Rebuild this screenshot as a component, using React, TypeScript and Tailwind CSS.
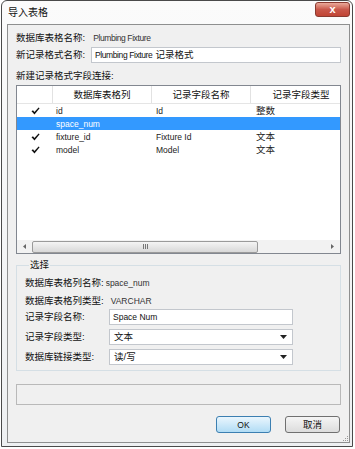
const font = { fontFamily: '"Liberation Sans", "Noto Sans CJK SC", sans-serif' };

function Check() {
  return (
    <svg width="9" height="8" viewBox="0 0 9 8" className="block">
      <path d="M0.5 4.3 L2 3.2 L3.4 5 L7.6 0.4 L8.6 1.2 L3.5 7.4 Z" fill="#111" />
    </svg>
  );
}

function Caret() {
  return (
    <svg width="7" height="4" viewBox="0 0 7 4" className="block">
      <path d="M0 0 H7 L3.5 4 Z" fill="#222" />
    </svg>
  );
}

const rows = [
  { check: true, col: "id", name: "Id", type: "整数" },
  { check: false, col: "space_num", name: "", type: "", selected: true },
  { check: true, col: "fixture_id", name: "Fixture Id", type: "文本" },
  { check: true, col: "model", name: "Model", type: "文本" },
];

function FieldTable() {
  return (
    <div className="mt-[2px] flex h-[169px] flex-col overflow-hidden border border-[#828790] bg-white">
      <div className="flex h-[18px] w-[334px] shrink-0 border-b border-[#e5e5e5] text-[#111]">
        <div className="w-[36px] border-r border-[#e2e2e2]" />
        <div className="flex w-[99px] items-center justify-center border-r border-[#e2e2e2]">数据库表格列</div>
        <div className="flex w-[99px] items-center justify-center border-r border-[#e2e2e2]">记录字段名称</div>
        <div className="flex w-[100px] items-center justify-center">记录字段类型</div>
      </div>
      {rows.map((r) => (
        <div
          key={r.col}
          className={`flex h-[13px] w-full shrink-0 items-center ${r.selected ? "bg-[#3399ff] text-white" : "text-[#222]"}`}
        >
          <div className="flex w-[36px] justify-center pl-[1px]">{r.check && <Check />}</div>
          <div className="w-[99px] pl-[3px] text-[8.5px]">{r.col}</div>
          <div className="w-[99px] pl-[4px] text-[8.5px]">{r.name}</div>
          <div className="w-[80px] pl-[5px]">{r.type}</div>
        </div>
      ))}
      <div className="flex-1" />
      <div className="flex h-[13px] shrink-0 items-center bg-[#f2f2f2]">
        <div className="flex w-[15px] justify-center">
          <svg width="3" height="5" viewBox="0 0 3 5"><path d="M3 0 V5 L0 2.5 Z" fill="#666" /></svg>
        </div>
        <div className="flex h-[12px] w-[226px] items-center justify-center rounded-[2px] border border-[#9a9a9a] bg-gradient-to-b from-[#f4f4f4] to-[#d8d8d8]">
          <div className="flex gap-[1px]">
            <span className="h-[5px] w-[1px] bg-[#777]" />
            <span className="h-[5px] w-[1px] bg-[#777]" />
            <span className="h-[5px] w-[1px] bg-[#777]" />
          </div>
        </div>
        <div className="flex-1" />
        <div className="flex w-[15px] justify-center">
          <svg width="3" height="5" viewBox="0 0 3 5"><path d="M0 0 V5 L3 2.5 Z" fill="#666" /></svg>
        </div>
      </div>
    </div>
  );
}

function Select({ value }: { value: string }) {
  return (
    <div className="flex h-[16px] w-[184px] items-center justify-between border border-[#c3c7cd] bg-white pl-[4px] pr-[5px] text-[#111]">
      <span>{value}</span>
      <Caret />
    </div>
  );
}

export default function App() {
  return (
    <div style={font} className="h-[449px] w-[355px] bg-white text-[9.5px] leading-[12px] text-[#111]">
      <div className="ml-[1px] flex h-[447px] w-[352px] flex-col rounded-t-[6px] border border-[#4a4a4a] bg-gradient-to-b from-[#fbfbfb] to-[#eef0f2]">
        <div className="flex h-[23px] shrink-0 items-start justify-between">
          <span className="mt-[6px] pl-[6px] text-[10px] text-[#111]">导入表格</span>
          <div className="mr-[2px] mt-[1px] flex h-[15px] w-[35px] items-center justify-center rounded-[3px] border border-[#8a3a30] bg-gradient-to-b from-[#e9a99a] via-[#c9584b] to-[#c04434] text-[11px] font-bold leading-none text-white">
            x
          </div>
        </div>
        <div className="relative ml-[5px] mr-[2px] flex h-[419px] shrink-0 flex-col border border-[#8e8f8f] bg-[#f0f0f0] px-[8px]">
          <div className="mt-[6px] flex h-[14px] items-center">
            <span>数据库表格名称:</span>
            <span className="ml-[8px] text-[8.5px] tracking-[-0.4px] text-[#333]">Plumbing Fixture</span>
          </div>
          <div className="mt-[2px] flex h-[16px] items-center">
            <span className="w-[75px]">新记录格式名称:</span>
            <div className="flex h-[16px] flex-1 items-center border border-[#c3c7cd] bg-white pl-[3px]">
              <span className="text-[8.5px] tracking-[-0.4px]">Plumbing Fixture</span>
              <span className="ml-[3px]">记录格式</span>
            </div>
          </div>
          <div className="mt-[6px] flex h-[14px] items-center">新建记录格式字段连接:</div>
          <FieldTable />
          <fieldset className="mt-[5px] border border-[#d5dfe5] pb-[5px] pl-[8px]">
            <legend className="ml-[4px] px-[1px] leading-[12px]">选择</legend>
            <div className="mt-[5px] flex h-[14px] items-center">
              <span>数据库表格列名称:</span>
              <span className="ml-[2px] text-[8.5px] text-[#333]">space_num</span>
            </div>
            <div className="mt-[4px] flex h-[14px] items-center">
              <span>数据库表格列类型:</span>
              <span className="ml-[7px] text-[8.5px] text-[#333]">VARCHAR</span>
            </div>
            <div className="mt-[1px] flex h-[16px] items-center">
              <span className="w-[84px]">记录字段名称:</span>
              <div className="flex h-[16px] w-[184px] items-center border border-[#c3c7cd] bg-white pl-[3px] text-[8.5px]">
                Space Num
              </div>
            </div>
            <div className="mt-[4px] flex h-[16px] items-center">
              <span className="w-[84px]">记录字段类型:</span>
              <Select value="文本" />
            </div>
            <div className="mt-[4px] flex h-[16px] items-center">
              <span className="w-[84px]">数据库链接类型:</span>
              <Select value="读/写" />
            </div>
          </fieldset>
          <div className="mt-[13px] h-[21px] border border-[#b9b9b9] bg-[#f0f0f0]" />
          <div className="mt-[11px] flex justify-end gap-[14px] pr-[1px]">
            <div className="flex h-[17px] w-[55px] items-center justify-center rounded-[3px] border border-[#3c7fb1] bg-gradient-to-b from-[#eaf6fd] to-[#b1dcf5] text-[8.5px]">
              OK
            </div>
            <div className="flex h-[17px] w-[55px] items-center justify-center rounded-[3px] border border-[#707070] bg-gradient-to-b from-[#f5f5f5] to-[#dcdcdc]">
              取消
            </div>
          </div>
          <div className="absolute bottom-[1px] right-[1px] grid grid-cols-3 gap-[1px]">
            <span />
            <span />
            <span className="h-[1px] w-[1px] bg-[#999]" />
            <span />
            <span className="h-[1px] w-[1px] bg-[#999]" />
            <span className="h-[1px] w-[1px] bg-[#999]" />
            <span className="h-[1px] w-[1px] bg-[#999]" />
            <span className="h-[1px] w-[1px] bg-[#999]" />
            <span className="h-[1px] w-[1px] bg-[#999]" />
          </div>
        </div>
      </div>
    </div>
  );
}
